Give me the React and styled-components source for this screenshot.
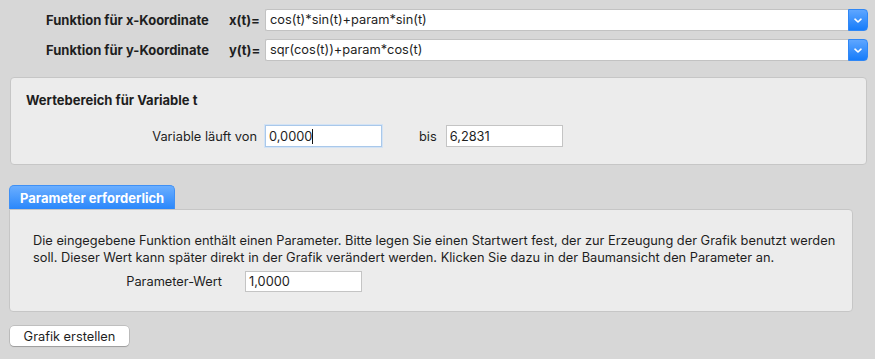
import React from "react";
import styled, { createGlobalStyle } from "styled-components";

const GlobalStyle = createGlobalStyle`
  html, body {
    margin: 0;
    padding: 0;
    background: #d7d7d7;
  }
  body {
    font-family: Inter, "Liberation Sans", Arial, sans-serif;
    font-size: 12.8px;
    color: #1e1e1e;
  }
`;

const Page = styled.div`
  width: 875px;
  height: 359px;
  box-sizing: border-box;
  padding: 9px 0 0 0;
  background: #d7d7d7;
  overflow: hidden;
`;

const FunctionList = styled.div`
  display: flex;
  flex-flow: column nowrap;
  gap: 8px;
  padding-left: 46px;
  padding-right: 7px;
`;

const FunctionRow = styled.div`
  display: flex;
  align-items: center;
  height: 22px;
`;

const BoldLabel = styled.span`
  font-weight: 700;
  font-size: 13px;
  white-space: nowrap;
`;

const VarLabel = styled(BoldLabel)`
  margin-left: auto;
  width: 36px;
  margin-right: 0;
`;

const Combo = styled.div`
  width: 603px;
  display: flex;
  height: 22px;
  box-sizing: border-box;
  background: #fff;
  border: 1px solid #c2c2c2;
  border-right: none;
  border-radius: 2px 4px 4px 2px;
`;

const ComboText = styled.div`
  flex: 1;
  padding-left: 4px;
  line-height: 20px;
  white-space: nowrap;
`;

const ComboButton = styled.div`
  width: 20px;
  margin: -1px 0;
  display: flex;
  align-items: center;
  justify-content: center;
  border-radius: 0 4px 4px 0;
  background: linear-gradient(#5ea6ff, #167cfa);
  border: 1px solid #2f87f6;
  box-sizing: border-box;
`;

const Panel = styled.div`
  margin: ${(p) => p.$margin || "0"};
  box-sizing: border-box;
  background: #ececec;
  border: 1px solid #c6c6c6;
  border-radius: ${(p) => (p.$tabbed ? "0 4px 4px 4px" : "4px")};
  padding: ${(p) => p.$padding};
`;

const PanelTitle = styled.div`
  font-weight: 700;
  font-size: 13px;
  line-height: 16px;
  padding-left: 15px;
`;

const FieldRow = styled.div`
  display: flex;
  align-items: center;
  margin-top: ${(p) => p.$top};
`;

const FieldLabel = styled.span`
  width: ${(p) => p.$width};
  text-align: right;
  margin-right: ${(p) => p.$gap};
  white-space: nowrap;
`;

const PlainLabel = styled.span`
  margin-left: 37px;
  margin-right: 9px;
`;

const Field = styled.div`
  width: 117px;
  height: ${(p) => p.$height || "22px"};
  box-sizing: border-box;
  background: #fff;
  border: 1px solid ${(p) => (p.$focused ? "#a9c8ea" : "#c4c4c4")};
  box-shadow: ${(p) => (p.$focused ? "0 0 0 1px #d3e3f5" : "none")};
  padding-left: 3px;
  display: flex;
  align-items: center;
`;

const Caret = styled.span`
  display: inline-block;
  width: 1px;
  height: 15px;
  background: #111;
`;

const TabArea = styled.div`
  margin: 20px 22px 0 9px;
`;

const Tab = styled.div`
  display: inline-block;
  height: 24px;
  box-sizing: border-box;
  padding: 0 10px;
  line-height: 24px;
  color: #fff;
  font-weight: 700;
  font-size: 13px;
  border-radius: 5px 5px 0 0;
  background: linear-gradient(#6aaeff, #2a87fb);
  border: 1px solid #3f90f5;
  border-bottom: none;
`;

const InfoText = styled.p`
  margin: 0;
  padding-left: 23px;
  line-height: 17px;
  white-space: nowrap;
`;

const ActionButton = styled.button`
  display: block;
  margin: 14px 0 0 10px;
  width: 119px;
  height: 20px;
  padding: 0;
  font-family: inherit;
  font-size: 12.8px;
  color: #1e1e1e;
  background: #fff;
  border: none;
  border-radius: 4px;
  box-shadow: 0 0 0 0.5px rgba(0, 0, 0, 0.22), 0 1px 1px rgba(0, 0, 0, 0.18);
`;

function Chevron() {
  return (
    <svg width="10" height="7" viewBox="0 0 10 7">
      <path d="M2 2.2 L5 5 L8 2.2" fill="none" stroke="#fff" strokeWidth="1.6" strokeLinecap="round" strokeLinejoin="round" />
    </svg>
  );
}

function FunctionCombo({ label, variable, value }) {
  return (
    <FunctionRow>
      <BoldLabel>{label}</BoldLabel>
      <VarLabel>{variable}</VarLabel>
      <Combo>
        <ComboText>{value}</ComboText>
        <ComboButton>
          <Chevron />
        </ComboButton>
      </Combo>
    </FunctionRow>
  );
}

export default function App() {
  return (
    <Page>
      <GlobalStyle />
      <FunctionList>
        <FunctionCombo
          label="Funktion für x-Koordinate"
          variable="x(t)="
          value="cos(t)*sin(t)+param*sin(t)"
        />
        <FunctionCombo
          label="Funktion für y-Koordinate"
          variable="y(t)="
          value="sqr(cos(t))+param*cos(t)"
        />
      </FunctionList>

      <Panel $margin="16px 8px 0 10px" $padding="14px 0 17px 0">
        <PanelTitle>Wertebereich für Variable t</PanelTitle>
        <FieldRow $top="17px">
          <FieldLabel $width="246px" $gap="8px">
            Variable läuft von
          </FieldLabel>
          <Field $focused>
            0,0000
            <Caret />
          </Field>
          <PlainLabel>bis</PlainLabel>
          <Field>6,2831</Field>
        </FieldRow>
      </Panel>

      <TabArea>
        <Tab>Parameter erforderlich</Tab>
        <Panel $tabbed $padding="22px 0 19px 0">
          <InfoText>
            Die eingegebene Funktion enthält einen Parameter. Bitte legen Sie einen Startwert fest, der zur
            Erzeugung der Grafik benutzt werden
            <br />
            soll. Dieser Wert kann später direkt in der Grafik verändert werden. Klicken Sie dazu in der
            Baumansicht den Parameter an.
          </InfoText>
          <FieldRow $top="5px">
            <FieldLabel $width="212px" $gap="23px">
              Parameter-Wert
            </FieldLabel>
            <Field $height="21px">1,0000</Field>
          </FieldRow>
        </Panel>
      </TabArea>

      <ActionButton>Grafik erstellen</ActionButton>
    </Page>
  );
}
